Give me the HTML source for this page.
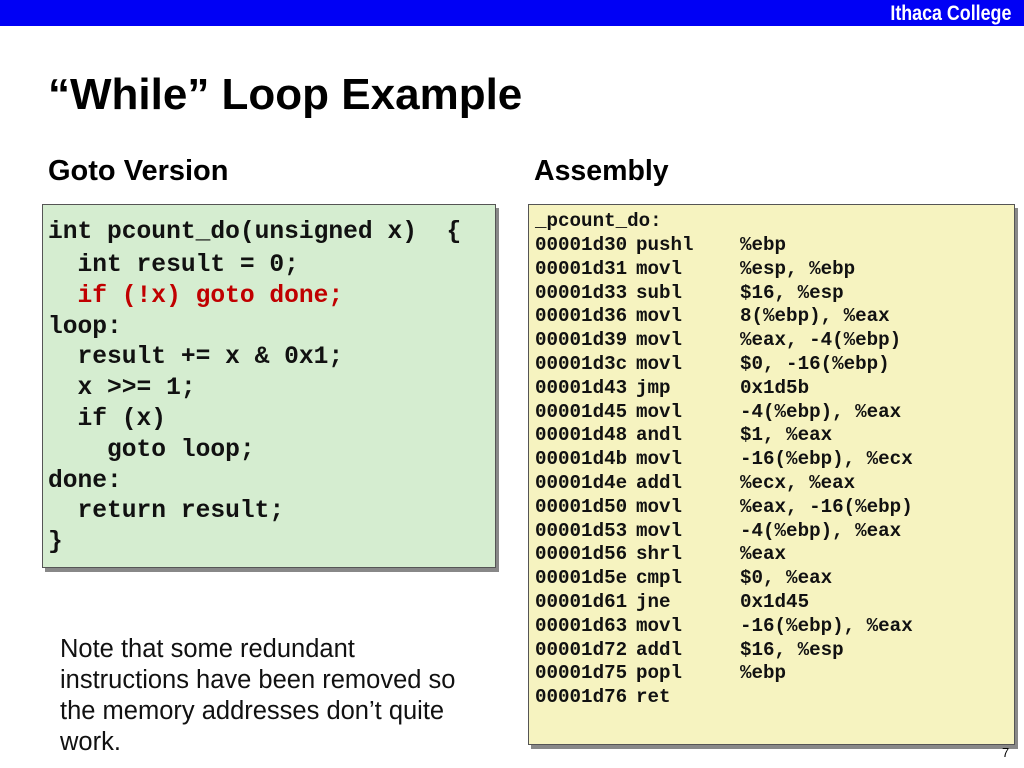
<!DOCTYPE html>
<html><head><meta charset="utf-8"><style>
body{margin:0;width:1024px;height:768px;position:relative;background:#fff;overflow:hidden;font-family:"Liberation Sans",sans-serif}
.bar{position:absolute;left:0;top:0;width:1024px;height:26px;background:#0000f5}
.logo{position:absolute;right:13px;top:3px;color:#fff;font:bold 21px "Liberation Sans Narrow","Liberation Sans",sans-serif;transform:scaleX(.85);transform-origin:right top;line-height:22px}
.t{position:absolute;font-weight:bold;color:#000;white-space:nowrap}
.box{position:absolute;border:1.5px solid #555;box-shadow:3px 4px 0 #888}
.m{position:absolute;font-family:"Liberation Mono",monospace;font-weight:bold;white-space:pre;color:#111}
.c{font-size:24.6px;left:48px}
.a{font-size:19.2px;line-height:23.8px}
.n{position:absolute;left:60px;font-size:25.5px;line-height:31px;color:#111;top:634px}
</style></head><body>
<div class="bar"></div><div class="logo">Ithaca College</div>
<div class="t" style="left:48px;top:70px;font-size:44px">“While” Loop Example</div>
<div class="t" style="left:48px;top:155px;font-size:29px">Goto Version</div>
<div class="t" style="left:534px;top:155px;font-size:28.5px">Assembly</div>
<div class="box" style="left:42px;top:204px;width:452px;height:362px;background:#d5edd0"></div>
<div class="m c" style="top:219px">int pcount_do(unsigned x)  {</div>
<div class="m c" style="top:252px">  int result = 0;</div>
<div class="m c" style="top:283px;color:#c00000">  if (!x) goto done;</div>
<div class="m c" style="top:314px">loop:</div>
<div class="m c" style="top:344px">  result += x &amp; 0x1;</div>
<div class="m c" style="top:375px">  x &gt;&gt;= 1;</div>
<div class="m c" style="top:406px">  if (x)</div>
<div class="m c" style="top:437px">    goto loop;</div>
<div class="m c" style="top:468px">done:</div>
<div class="m c" style="top:498px">  return result;</div>
<div class="m c" style="top:529px">}</div>
<div class="box" style="left:528px;top:204px;width:485px;height:539px;background:#f6f3c0"></div>
<div class="m a" style="left:535px;top:210px">_pcount_do:</div>
<div class="m a" style="left:535px;top:234px">00001d30
00001d31
00001d33
00001d36
00001d39
00001d3c
00001d43
00001d45
00001d48
00001d4b
00001d4e
00001d50
00001d53
00001d56
00001d5e
00001d61
00001d63
00001d72
00001d75
00001d76</div>
<div class="m a" style="left:636px;top:234px">pushl
movl
subl
movl
movl
movl
jmp
movl
andl
movl
addl
movl
movl
shrl
cmpl
jne
movl
addl
popl
ret</div>
<div class="m a" style="left:740px;top:234px">%ebp
%esp, %ebp
$16, %esp
8(%ebp), %eax
%eax, -4(%ebp)
$0, -16(%ebp)
0x1d5b
-4(%ebp), %eax
$1, %eax
-16(%ebp), %ecx
%ecx, %eax
%eax, -16(%ebp)
-4(%ebp), %eax
%eax
$0, %eax
0x1d45
-16(%ebp), %eax
$16, %esp
%ebp
</div>
<div class="n">Note that some redundant<br>instructions have been removed so<br>the memory addresses don’t quite<br>work.</div>
<div style="position:absolute;left:1002px;top:745px;font-size:13px">7</div>
</body></html>
